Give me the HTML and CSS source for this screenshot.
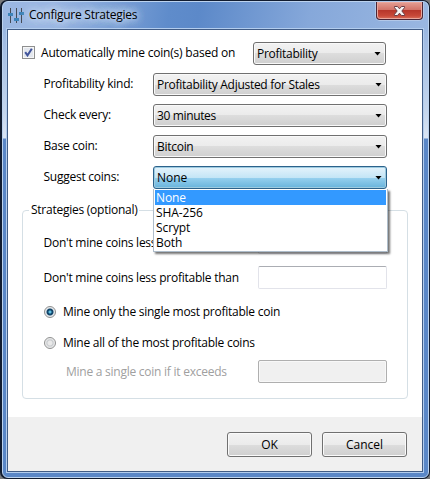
FILE: index.html
```html
<!DOCTYPE html>
<html lang="en">
<head>
<meta charset="utf-8">
<title>Configure Strategies</title>
<link rel="stylesheet" href="styles.css">
</head>
<body>
<div class="window">
  <div class="glass">
    <header class="titlebar">
      <svg class="app-icon" width="16" height="16" viewBox="0 0 16 16" shape-rendering="crispEdges">
        <path d="M2 1h1v15h-1zM8 1h1v15h-1zM13 1h1v15h-1z" fill="#454b55"/>
        <path d="M0 6h5v3h-5zM6 11h5v3h-5zM11 5h5v3h-5z" fill="#3d83b8"/>
      </svg>
      <h1 class="title">Configure Strategies</h1>
      <button class="close" aria-label="Close">
        <svg width="13" height="12" viewBox="0 0 13 12"><path d="M1.5 1.5h3l2 2.3 2-2.3h3v1.2l-2.7 3.3 2.7 3.3v1.2h-3l-2-2.3-2 2.3h-3v-1.2l2.7-3.3-2.7-3.3z" fill="#f5f5f5" stroke="#6a3c44"/></svg>
      </button>
    </header>
    <main class="client">
      <div class="form">
        <div class="row first">
          <span class="check"><svg width="9" height="9" viewBox="0 0 9 9"><path d="M1.2 4.2L3.5 7.4 7.8 .8" fill="none" stroke="#41549a" stroke-width="2"/></svg></span>
          <label class="auto">Automatically mine coin(s) based on</label>
          <div class="combo short"><span>Profitability</span><i class="arrow"></i></div>
        </div>
        <div class="row"><label>Profitability kind:</label><div class="combo"><span>Profitability Adjusted for Stales</span><i class="arrow"></i></div></div>
        <div class="row"><label>Check every:</label><div class="combo"><span class="minutes">30 minutes</span><i class="arrow"></i></div></div>
        <div class="row"><label>Base coin:</label><div class="combo"><span>Bitcoin</span><i class="arrow"></i></div></div>
        <div class="row"><label>Suggest coins:</label>
          <div class="combo open"><span class="wide">None</span><i class="arrow"></i>
            <ul class="menu"><li class="selected">None</li><li>SHA-256</li><li>Scrypt</li><li>Both</li></ul>
          </div>
        </div>
      </div>
      <section class="group">
        <h2 class="legend">Strategies (optional)</h2>
        <div class="field one"><label>Don't mine coins less than</label><span class="input"></span></div>
        <div class="field two"><label>Don't mine coins less profitable than</label><span class="input"></span></div>
        <div class="option"><span class="radio on"></span><label>Mine only the single most profitable coin</label></div>
        <div class="option"><span class="radio"></span><label>Mine all of the most profitable coins</label></div>
        <div class="field off"><label>Mine a single coin if it exceeds</label><span class="input"></span></div>
      </section>
      <footer class="footer"><button class="button">OK</button><button class="button">Cancel</button></footer>
    </main>
  </div>
</div>
</body>
</html>
```
FILE: styles.css
```css
* { box-sizing: border-box; }
body { margin: 0; background: #77787a; font: 12px/16px "Open Sans", "Noto Sans", sans-serif; color: #000; }
h1, h2, ul { margin: 0; padding: 0; font: inherit; list-style: none; }
button { font: inherit; color: inherit; padding: 0; }
.window { width: 430px; height: 479px; padding: 1px 1px 1px 2px; background: #111c30; border-radius: 7px; overflow: hidden; letter-spacing: -.25px; }
.glass { height: 477px; border: 1px solid #bcd3ef; border-radius: 6px; padding: 0 5px 5px 5px;
  background:
    linear-gradient(100deg, #9bb7e2 0, #9bb7e2 12%, #5f8ccb 39%, #5c89c9 46%, #86a8da 72%, #9ab7e1 100%) 0 0 / 100% 28px no-repeat,
    linear-gradient(#9ab7e1 28px, #9ebae2 34px, #c5d6ed 110px, #dae5f4 136px, #5a87c7 137px); }
.titlebar { display: flex; height: 27px; }
.app-icon { margin-top: 5px; }
.title { margin: 4px 0 0 5px; width: 120px; font-size: 12px; line-height: 18px; white-space: nowrap; text-shadow: 0 0 8px #d5e2f5, 0 0 8px #d5e2f5, 0 0 8px #d5e2f5; }
.close { display: grid; place-items: center; width: 47px; height: 18px; margin: 0 0 0 auto; border: 1px solid #4a2535; border-top: 0; border-radius: 0 0 4px 4px; box-shadow: inset 0 0 0 1px #e9a79d, 0 0 0 1px #b3c8e8; background: linear-gradient(#e5a095, #d37469 45%, #b7372b 50%, #c74838 80%, #d9705c); }
.client { display: flex; flex-direction: column; height: 443px; margin-left: -1px; border: 1px solid #415c85; background: #fff; box-shadow: 0 0 0 1px #b3cdee; }
.form { padding: 12px 0 0 14px; }
.row { display: flex; align-items: center; height: 23px; margin-bottom: 8px; padding-left: 21.5px; white-space: nowrap; }
.row > label { width: 109.5px; margin-top: -2px; }
.row.first { padding-left: 0; }
.row .auto { width: 212px; margin-left: 6px; letter-spacing: -.2px; }
.check { display: grid; place-items: center; width: 13px; height: 13px; margin-top: -2px; border: 1px solid #8e8f8f; background: #e3e7ee; box-shadow: inset 0 0 0 1px #f6f6f6; }
.combo { position: relative; display: flex; align-items: center; justify-content: space-between; width: 234px; height: 23px; padding: 0 4px 0 3px; border: 1px solid #707070; border-radius: 3px; background: linear-gradient(#f2f2f2 0, #ebebeb 50%, #dddddd 50%, #cfcfcf 100%); box-shadow: inset 0 0 0 1px #f9f9f9; }
.combo > span { letter-spacing: -.28px; }
.combo.short { width: 133px; }
.combo > .minutes { letter-spacing: -.36px; }
.combo > .wide { letter-spacing: 0; }
.arrow { width: 7px; height: 4px; background: #000; clip-path: polygon(0 0, 100% 0, 50% 100%); }
.combo.open { border-color: #2c628b; background: linear-gradient(#e5f3fb 0, #c4e5f6 50%, #98d1ef 50%, #68b3db 100%); box-shadow: inset 0 0 0 1px #9dcbe0; }
.menu { position: absolute; z-index: 2; top: 22px; left: -1px; width: 235px; height: 63px; padding: 1px; border: 1px solid #aebdcb; border-top: 0; background: #fff; box-shadow: 2px 2px 2px rgba(0,0,0,.55); letter-spacing: -.1px; }
.menu li { height: 15px; padding-left: 1px; line-height: 15px; }
.menu .selected { background: #3399ff; color: #fff; }
.group { width: 386px; height: 189px; margin: 13px 0 0 14px; border: 1px solid #d5dfe5; border-radius: 4px; }
.legend { width: 110px; height: 17px; margin: -9px 0 0 6px; padding-left: 2px; background: #fff; white-space: nowrap; }
.field { display: flex; align-items: center; height: 23px; margin-top: 12px; padding-left: 20.5px; white-space: nowrap; }
.field label { width: 214.5px; }
.input { width: 129px; height: 23px; border: 1px solid #e2e3ea; border-top-color: #abadb3; border-radius: 2px; background: #fff; }
.option { display: flex; align-items: center; height: 16px; margin-top: 15px; padding-left: 21px; }
.option label { margin-left: 7px; }
.radio { width: 12px; height: 12px; border: 1px solid #8e8f8f; border-radius: 50%; background: radial-gradient(circle, #e9e9e9 0 2px, #c8cbce 3px, #f4f4f4 5px); }
.radio.on { background: radial-gradient(circle at 50% 50%, #5fc0e3 0 1px, #12466b 2px 3px, #e6e9ec 4px); }
.field.off { margin-top: 9px; padding-left: 43px; color: #a0a0a0; }
.off label { width: 192px; }
.off .input { border-color: #afafaf; background: #f0f0f0; box-shadow: inset 0 0 0 1px #f8f8f8; }
.footer { display: flex; justify-content: flex-end; gap: 10px; margin-top: auto; height: 54px; padding: 15px 15px 0 0; background: #f0f0f0; }
.button { width: 85px; height: 25px; border: 1px solid #707070; border-radius: 3px; background: linear-gradient(#f2f2f2, #ebebeb 50%, #ddd 50%, #cfcfcf); box-shadow: inset 0 0 0 1px #fafafa; }
```
